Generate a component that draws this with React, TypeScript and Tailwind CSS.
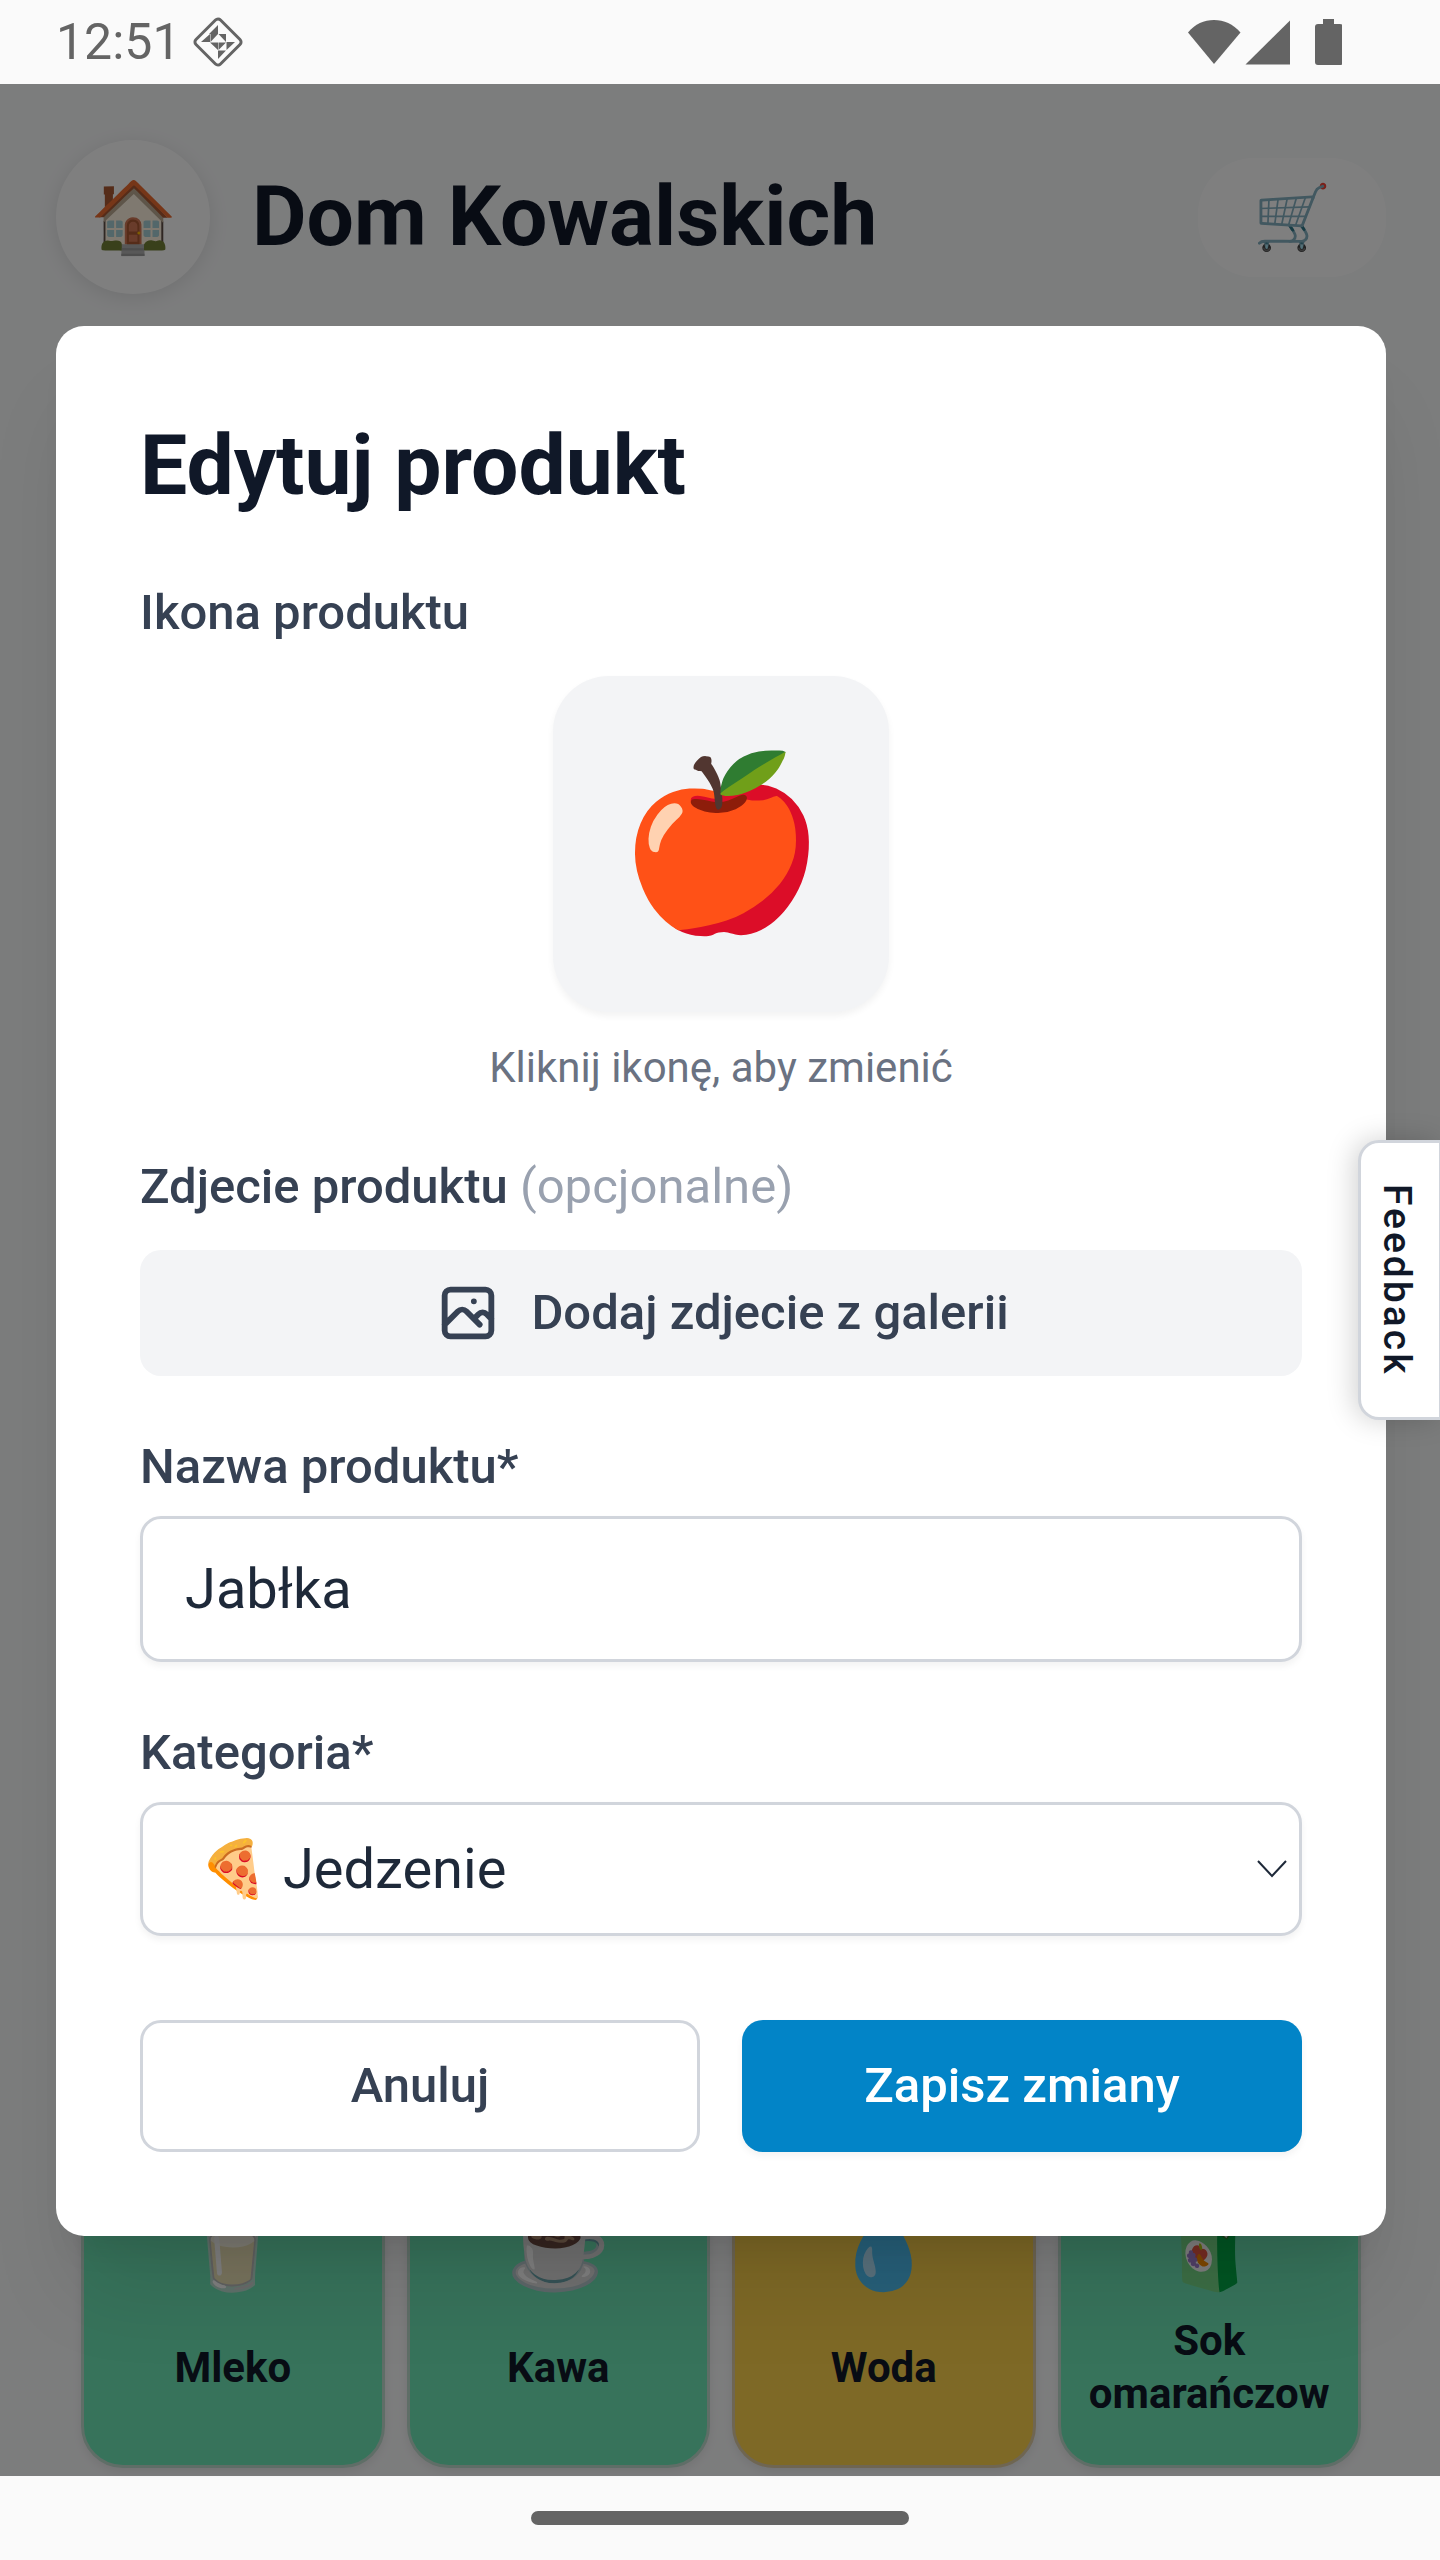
import React, { useState } from "react";

interface ProductTile {
  icon: string;
  label: string;
  className: string;
}

const TILES: ProductTile[] = [
  { icon: "🥛", label: "Mleko", className: "bg-[#6ee7b7] border-[#bfdccf]" },
  { icon: "☕", label: "Kawa", className: "bg-[#6ee7b7] border-[#bfdccf]" },
  { icon: "💧", label: "Woda", className: "bg-[#fcd34d] border-[#dfcca4]" },
  { icon: "🧃", label: "Sok omarańczow", className: "bg-[#6ee7b7] border-[#bfdccf]" },
];

const CATEGORIES = [
  { value: "food", label: "🍕 Jedzenie" },
  { value: "drinks", label: "🥛 Napoje" },
  { value: "home", label: "🏠 Dom" },
];

const StatusBar: React.FC = () => (
  <div className="flex h-21 shrink-0 items-center justify-between bg-[#fafafa] pl-14 pr-[98px] text-[#646464]">
    <div className="flex items-center gap-3">
      <span className="text-[50px] leading-[56px]">12:51</span>
      <svg className="h-[50px] w-[50px]" viewBox="0 0 50 50" fill="none">
        <path
          d="M22.5 3 3 22.5a3.5 3.5 0 0 0 0 5L22.5 47a3.5 3.5 0 0 0 5 0L47 27.5a3.5 3.5 0 0 0 0-5L27.5 3a3.5 3.5 0 0 0-5 0Z"
          stroke="currentColor"
          strokeWidth="3"
        />
        <path
          d="M25 8v9h-9zM17 17v8H8zM17.500 17H25l-7.500 8zM25.500 17H33v8zM17 25.500h8V33zM25.500 25.500H33L25.500 33zM33.500 25H42l-8.500 8zM25 33.500h8L25 42z"
          fill="currentColor"
        />
      </svg>
    </div>
    {/* Wifi, signal, battery */}
    <svg className="h-[46px] w-[156px]" viewBox="0 0 156 46" fill="currentColor">
      <path d="M2 13.500C9 5 18 1 28 1s19 4 26.500 12.500L28 45z" />
      <path d="M104 1.500V45.500H59.500z" />
      <path d="M137 0h11v5h6a3 3 0 0 1 3 3v35a3 3 0 0 1-3 3h-22a3 3 0 0 1-3-3V8a3 3 0 0 1 3-3h5z" />
    </svg>
  </div>
);

const HomeScreen: React.FC = () => (
  <div className="col-start-1 row-start-1 flex flex-col justify-between bg-gray-50">
    <header className="flex items-center pt-14 pr-[54px] pl-14">
      <div className="flex size-[154px] shrink-0 items-center justify-center rounded-full bg-white text-[70px] leading-none shadow-[0_4px_20px_rgba(0,0,0,0.1)]">
        🏠
      </div>
      <h1 className="ml-[42px] text-[84px] leading-[112px] font-bold text-gray-900">Dom Kowalskich</h1>
      <button
        aria-label="Lista zakupów"
        className="ml-auto flex h-[119px] w-[188px] items-center justify-center rounded-[56px] bg-white text-[63px] leading-none"
      >
        🛒
      </button>
    </header>
    <div className="grid grid-cols-4 gap-[22px] pr-[79px] pb-2 pl-[81px]">
      {TILES.map((tile) => (
        <div
          key={tile.label}
          className={`flex flex-col items-center rounded-[42px] border-3 px-4 pt-[42px] pb-[45px] shadow-[0_4px_10px_rgba(0,0,0,0.08)] ${tile.className}`}
        >
          <span className="text-[84px] leading-[112px]">{tile.icon}</span>
          <span className="mt-[11px] flex h-[106px] items-center text-center text-[42px] leading-[53px] font-bold text-gray-900">
            {tile.label}
          </span>
        </div>
      ))}
    </div>
  </div>
);

const EditProductModal: React.FC = () => {
  const [name, setName] = useState("Jabłka");
  const [category, setCategory] = useState("food");

  return (
    <div
      role="dialog"
      aria-labelledby="edit-title"
      className="rounded-[28px] bg-white p-21 shadow-[0_70px_88px_-18px_rgba(0,0,0,0.1),0_28px_35px_-21px_rgba(0,0,0,0.1)]"
    >
      <h2 id="edit-title" className="text-[84px] leading-[112px] font-bold text-gray-900">
        Edytuj produkt
      </h2>

      {/* Icon picker */}
      <p className="mt-14 text-[49px] leading-[70px] font-medium text-gray-700">Ikona produktu</p>
      <div className="mt-7 flex flex-col items-center">
        <button
          aria-label="Zmień ikonę"
          className="flex size-84 items-center justify-center rounded-[56px] bg-gray-100 text-[168px] leading-none shadow-[0_4px_7px_rgba(0,0,0,0.05)]"
        >
          🍎
        </button>
        <p className="mt-7 text-[42px] leading-[56px] text-gray-500">Kliknij ikonę, aby zmienić</p>
      </div>

      {/* Photo */}
      <p className="mt-14 text-[49px] leading-[70px] font-medium text-gray-700">
        Zdjecie produktu <span className="font-normal text-gray-400">(opcjonalne)</span>
      </p>
      <button className="mt-7 flex w-full items-center justify-center gap-7 rounded-[21px] bg-gray-100 py-7 text-[49px] leading-[70px] font-medium text-gray-700">
        <svg
          className="size-[70px]"
          viewBox="0 0 24 24"
          fill="none"
          stroke="currentColor"
          strokeWidth="2"
          strokeLinecap="round"
          strokeLinejoin="round"
        >
          <path d="M4 16l4.586-4.586a2 2 0 012.828 0L16 16m-2-2l1.586-1.586a2 2 0 012.828 0L20 14m-6-6h.01M6 20h12a2 2 0 002-2V6a2 2 0 00-2-2H6a2 2 0 00-2 2v12a2 2 0 002 2z" />
        </svg>
        Dodaj zdjecie z galerii
      </button>

      {/* Name */}
      <label htmlFor="product-name" className="mt-14 block text-[49px] leading-[70px] font-medium text-gray-700">
        Nazwa produktu*
      </label>
      <input
        id="product-name"
        type="text"
        value={name}
        onChange={(e) => setName(e.target.value)}
        className="mt-3.5 block h-[146px] w-full rounded-[21px] border-3 border-gray-300 bg-white px-[42px] text-[56px] text-gray-800 shadow-[0_4px_7px_rgba(0,0,0,0.05)] focus:outline-none"
      />

      {/* Category */}
      <label htmlFor="product-category" className="mt-14 block text-[49px] leading-[70px] font-medium text-gray-700">
        Kategoria*
      </label>
      <div className="relative mt-3.5">
        <select
          id="product-category"
          value={category}
          onChange={(e) => setCategory(e.target.value)}
          className="block h-[134px] w-full appearance-none rounded-[21px] border-3 border-gray-300 bg-white px-14 text-[56px] text-gray-800 shadow-[0_4px_7px_rgba(0,0,0,0.05)] focus:outline-none"
        >
          {CATEGORIES.map((option) => (
            <option key={option.value} value={option.value}>
              {option.label}
            </option>
          ))}
        </select>
        <svg
          className="pointer-events-none absolute top-1/2 right-3.5 h-5 w-8 -translate-y-1/2 text-gray-800"
          viewBox="0 0 32 20"
          fill="none"
          stroke="currentColor"
          strokeWidth="2"
        >
          <path d="M2 2l14 15L30 2" />
        </svg>
      </div>

      {/* Actions */}
      <div className="mt-21 grid grid-cols-2 gap-[42px] text-[49px] leading-[70px] font-medium">
        <button className="h-33 rounded-[21px] border-3 border-gray-300 bg-white text-gray-700">Anuluj</button>
        <button className="h-33 rounded-[21px] bg-[#0284c7] text-white shadow-[0_4px_7px_rgba(0,0,0,0.05)]">
          Zapisz zmiany
        </button>
      </div>
    </div>
  );
};

export default function App() {
  return (
    <div className="flex min-h-screen flex-col overflow-x-hidden font-[Roboto,sans-serif]">
      <StatusBar />
      <main className="relative grid flex-1">
        <HomeScreen />
        <div className="relative col-start-1 row-start-1 flex flex-col justify-center bg-black/50 pt-[242px] pr-[54px] pb-60 pl-14">
          <EditProductModal />
        </div>
        <button className="absolute top-1/2 right-0 h-70 w-[82px] -translate-y-1/2 rounded-l-[21px] border-3 border-r border-gray-300 bg-white pr-1.5 text-[39px] font-medium tracking-[3px] text-gray-900 shadow-[-4px_0_28px_rgba(0,0,0,0.18)] [writing-mode:vertical-rl]">
          Feedback
        </button>
      </main>
      <div className="flex h-21 shrink-0 items-center justify-center bg-[#fafafa]">
        <div className="h-3.5 w-[378px] rounded-full bg-[#646464]" />
      </div>
    </div>
  );
}
